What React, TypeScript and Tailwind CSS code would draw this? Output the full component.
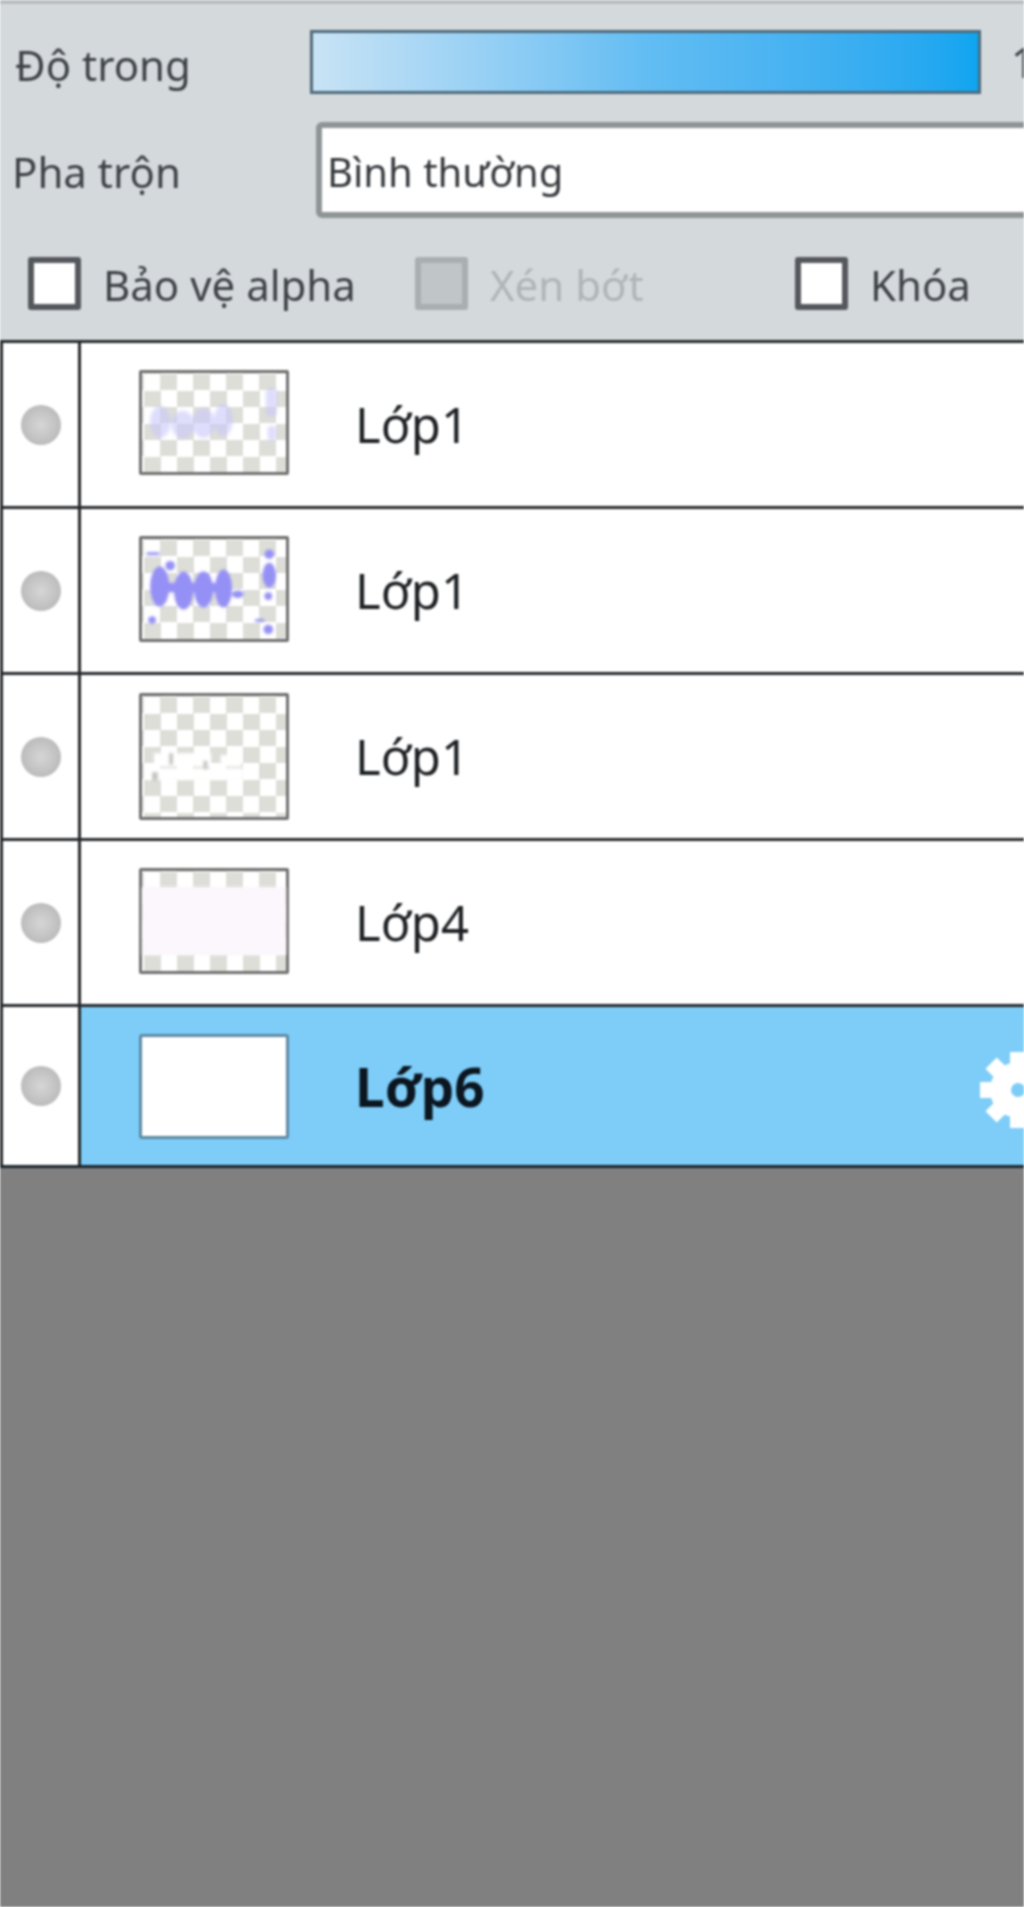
import type { ReactNode } from "react";

const checker =
  "bg-[repeating-conic-gradient(#deded9_0_25%,#ffffff_0_50%)] bg-[length:33px_33px] bg-[position:2px_1px]";

function Check({ label, disabled, className }: { label: string; disabled?: boolean; className: string }) {
  return (
    <div className={`flex items-center gap-[22px] ${className}`}>
      <span
        className={
          disabled
            ? "h-[53px] w-[53px] shrink-0 rounded-[3px] border-[6px] border-[#a9aeb1] bg-[#c0c5c8]"
            : "h-[53px] w-[53px] shrink-0 rounded-[3px] border-[6px] border-[#55595d] bg-white"
        }
      />
      <span className={disabled ? "pt-[2px] text-[#b0b5b8]" : "pt-[2px] text-[#3f4347]"}>{label}</span>
    </div>
  );
}

function Gear() {
  const teeth = [0, 45, 90, 135, 180, 225, 270, 315];
  return (
    <svg viewBox="0 0 76 76" className="ml-auto mr-[-32px] mt-[8px] h-[76px] w-[76px] shrink-0" aria-hidden>
      <path
        fillRule="evenodd"
        fill="#ffffff"
        d="M38 10a28 28 0 1 0 0 56a28 28 0 1 0 0-56zM38 31a7 7 0 1 1 0 14a7 7 0 1 1 0-14z"
      />
      {teeth.map((deg) => (
        <rect key={deg} x="30" y="0" width="16" height="14" fill="#ffffff" transform={`rotate(${deg} 38 38)`} />
      ))}
    </svg>
  );
}

function FaintArt() {
  return (
    <svg viewBox="0 0 150 105" className="h-full w-full blur-[1.5px]" aria-hidden>
      <g fill="#c9c8fb" opacity="0.6">
        <ellipse cx="18" cy="52" rx="11" ry="17" />
        <ellipse cx="42" cy="55" rx="12" ry="15" />
        <ellipse cx="64" cy="53" rx="12" ry="16" />
        <ellipse cx="85" cy="50" rx="10" ry="17" />
        <rect x="130" y="16" width="12" height="30" rx="5" />
        <rect x="132" y="56" width="9" height="16" rx="4" />
      </g>
    </svg>
  );
}

function StrongArt() {
  return (
    <svg viewBox="0 0 150 105" className="h-full w-full blur-[1px]" aria-hidden>
      <g fill="#9590f5">
        <ellipse cx="18" cy="50" rx="10" ry="21" />
        <ellipse cx="43" cy="54" rx="10" ry="20" />
        <ellipse cx="64" cy="53" rx="10" ry="19" />
        <ellipse cx="85" cy="52" rx="9" ry="20" />
        <rect x="18" y="46" width="68" height="10" />
        <ellipse cx="100" cy="58" rx="6" ry="4" />
        <circle cx="29" cy="28" r="5" />
        <ellipse cx="133" cy="38" rx="7" ry="13" />
        <circle cx="132" cy="60" r="4" />
        <circle cx="133" cy="16" r="5" />
        <circle cx="10" cy="85" r="4" />
        <circle cx="132" cy="95" r="5" />
        <rect x="4" y="14" width="14" height="3" rx="1.5" />
        <rect x="118" y="84" width="10" height="3" rx="1.5" />
      </g>
    </svg>
  );
}

function SpeckArt() {
  return (
    <svg viewBox="0 0 150 127" className="h-full w-full blur-[1px]" aria-hidden>
      <g fill="#ffffff">
        <rect x="12" y="60" width="60" height="14" />
        <rect x="82" y="62" width="22" height="12" />
        <rect x="6" y="76" width="100" height="12" />
      </g>
      <g fill="#c4c4c0">
        <rect x="28" y="60" width="4" height="12" />
        <rect x="64" y="68" width="4" height="9" />
        <rect x="10" y="80" width="6" height="9" />
      </g>
    </svg>
  );
}

function WashArt() {
  return <div className="mt-[16px] h-[68px] bg-[#fcf7fc] blur-[1px]" />;
}

const rows: { name: string; thumb: string; art: ReactNode; active?: boolean; last?: boolean }[] = [
  { name: "Lớp1", thumb: "mb-[4px] h-[105px]", art: <FaintArt /> },
  { name: "Lớp1", thumb: "mb-[4px] h-[106px]", art: <StrongArt /> },
  { name: "Lớp1", thumb: "h-[127px]", art: <SpeckArt /> },
  { name: "Lớp4", thumb: "mb-[4px] h-[106px]", art: <WashArt /> },
  { name: "Lớp6", thumb: "h-[105px]", art: null, active: true, last: true },
];

export default function App() {
  return (
    <div className="flex h-[1907px] w-[1024px] flex-col overflow-hidden bg-[#808080] font-['Noto_Sans',sans-serif] text-[42px] leading-none blur-[1px]">
      <div className="h-[340px] shrink-0 border-t-[4px] border-[#b9bdc0] bg-[#d4d9dc] text-[#3f4347]">
        <div className="mt-[26px] flex h-[64px] items-center pl-[15px]">
          <span className="w-[295px] shrink-0 pt-[6px]">Độ trong</span>
          <div className="h-[64px] w-[671px] shrink-0 border-[3px] border-[#4f6b7c] bg-gradient-to-r from-[#c8e3f5] via-[#62bdf3] to-[#0ea5f0]" />
          <span className="ml-[30px] shrink-0">100</span>
        </div>
        <div className="mt-[28px] flex h-[96px] items-center pl-[12px]">
          <span className="w-[304px] shrink-0 pt-[4px]">Pha trộn</span>
          <div className="flex h-[96px] w-[760px] shrink-0 items-center rounded-[6px] border-[6px] border-[#8f9496] bg-white pl-[5px] pt-[4px] text-[40px] text-[#36393d]">
            Bình thường
          </div>
        </div>
        <div className="mt-[39px] flex h-[53px] items-center">
          <Check label="Bảo vệ alpha" className="ml-[28px] w-[387px]" />
          <Check label="Xén bớt" disabled className="w-[380px]" />
          <Check label="Khóa" className="" />
        </div>
      </div>

      <div className="shrink-0 border-b-[3px] border-[#1c262c]">
        {rows.map((row, i) => (
          <div key={i} className={`flex border-t-[3px] border-[#26292c] bg-white ${row.last ? "h-[161px]" : "h-[166px]"}`}>
            <div className="flex w-[81px] shrink-0 items-center justify-center border-x-[3px] border-[#26292c] bg-white">
              <span className="h-[40px] w-[40px] rounded-full bg-[radial-gradient(circle,#d6d6d6_0%,#bababa_75%)]" />
            </div>
            <div
              className={
                row.active
                  ? "flex min-w-0 flex-1 items-center overflow-hidden bg-[#7dcdf8] pl-[58px] text-[53px] font-bold text-[#0b1620]"
                  : "flex min-w-0 flex-1 items-center overflow-hidden pl-[58px] text-[49px] text-[#1f2225]"
              }
            >
              <div
                className={
                  row.active
                    ? `w-[150px] shrink-0 rounded-[3px] border-[3px] border-[#5f8aa3] bg-white ${row.thumb}`
                    : `w-[150px] shrink-0 rounded-[2px] border-[3px] border-[#707070] ${checker} ${row.thumb}`
                }
              >
                {row.art}
              </div>
              <span className="ml-[66px]">{row.name}</span>
              {row.active && <Gear />}
            </div>
          </div>
        ))}
      </div>
    </div>
  );
}
